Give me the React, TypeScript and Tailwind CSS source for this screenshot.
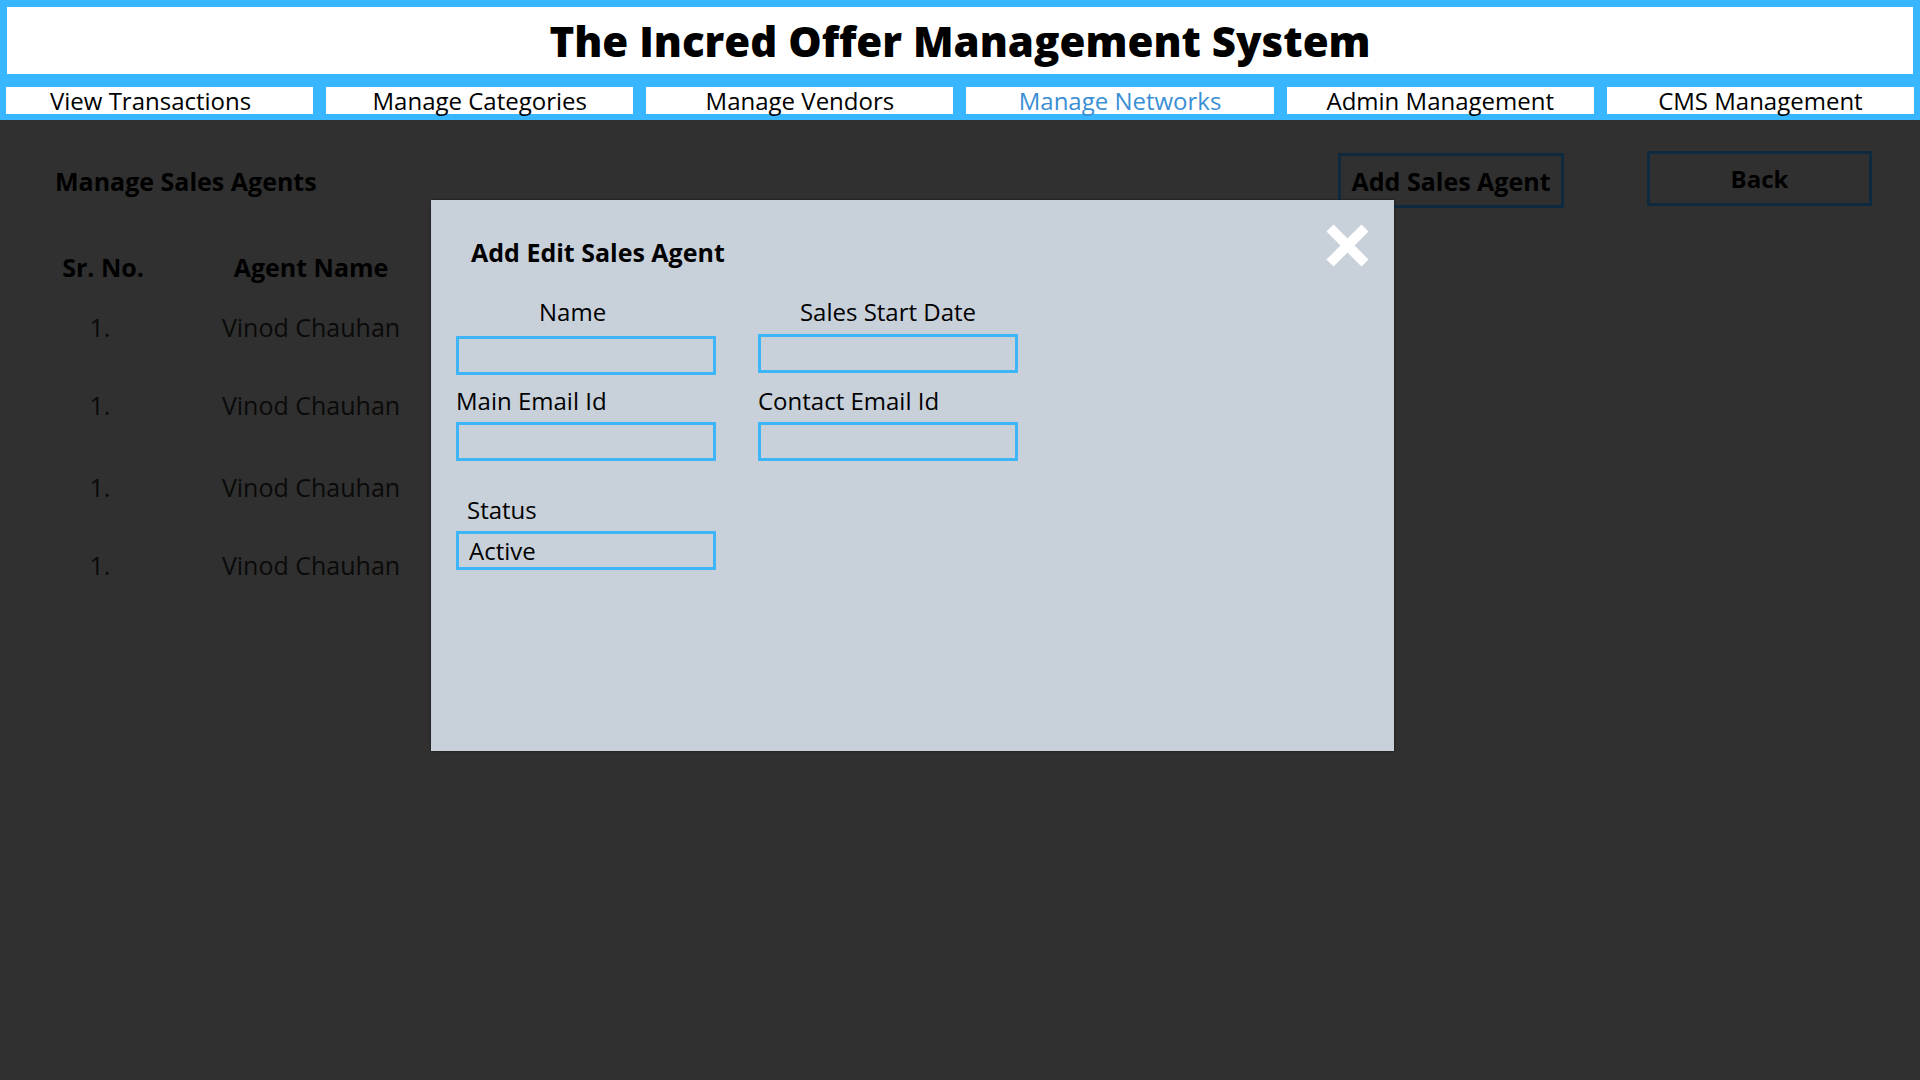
import React from "react";

const navItems = [
  "View Transactions",
  "Manage Categories",
  "Manage Vendors",
  "Manage Networks",
  "Admin Management",
  "CMS Management",
];

const rows = [
  { h: "h-[78px]" },
  { h: "h-[82px]" },
  { h: "h-[78px]" },
  { h: "h-[78px]" },
];

function Field({ className = "", children }: { className?: string; children?: React.ReactNode }) {
  return (
    <div
      className={`h-[39px] w-[260px] border-[3px] border-[#3db5f7] flex items-center pl-[10px] text-[24px] leading-[32px] text-black ${className}`}
    >
      {children}
    </div>
  );
}

export default function App() {
  return (
    <div
      className="relative w-[1920px] h-[1080px] bg-[#303030] flex flex-col overflow-hidden"
      style={{ fontFamily: '"Open Sans", "Noto Sans", sans-serif' }}
    >
      {/* Top header block */}
      <div className="bg-[#38b6ff] pt-[7px] pb-[6px]">
        <div className="mx-[7px] h-[67px] bg-white flex items-center justify-center">
          <h1 className="text-[42px] leading-[56px] font-extrabold text-black">
            The Incred Offer Management System
          </h1>
        </div>
        <nav className="mt-[13px] px-[6px] grid grid-cols-6 gap-[13px]">
          {navItems.map((n, i) => (
            <div
              key={n}
              className={`min-w-0 h-[27px] bg-white text-center text-[24px] leading-[27px] ${
                i === 0 ? "pr-[18px]" : ""
              } ${n === "Manage Networks" ? "text-[#3a8fd4]" : "text-black"}`}
            >
              {n}
            </div>
          ))}
        </nav>
      </div>

      {/* Content */}
      <div className="relative flex-1">
        <div className="flex items-start pt-[31px] pl-[55px] pr-[48px]">
          <h2 className="mt-[12px] text-[25px] leading-[36px] font-bold text-black">
            Manage Sales Agents
          </h2>
          <div className="flex-1" />
          <div className="mt-[2px] w-[226px] h-[55px] border-[3px] border-[#0e2a3e] flex items-center justify-center">
            <span className="text-[25px] leading-[34px] font-bold text-black whitespace-nowrap">
              Add Sales Agent
            </span>
          </div>
          <div className="ml-[83px] w-[225px] h-[55px] border-[3px] border-[#0e2a3e] flex items-center justify-center">
            <span className="text-[24px] leading-[34px] font-bold text-black">Back</span>
          </div>
        </div>

        {/* Table */}
        <div className="mt-[42px] ml-[40px] w-[416px]">
          <div className="grid grid-cols-[126px_290px] h-[60px] text-[25px] leading-[34px] font-bold text-black">
            <div className="text-center">Sr. No.</div>
            <div className="text-center">Agent Name</div>
          </div>
          {rows.map((r, i) => (
            <div
              key={i}
              className={`grid grid-cols-[126px_290px] ${r.h} text-[25px] leading-[34px] text-[#0a0a0a]`}
            >
              <div className="text-center pr-[6px]">1.</div>
              <div className="text-center">Vinod Chauhan</div>
            </div>
          ))}
        </div>

        {/* Modal */}
        <div className="absolute left-[431px] top-[80px] w-[963px] h-[551px] bg-[#c8d0da] shadow-[0_0_2px_rgba(0,0,0,0.6)]">
          <button className="absolute right-[25px] top-[24px] w-[43px] h-[43px]" aria-label="Close">
            <svg viewBox="0 0 43 43" width="43" height="43">
              <line x1="4" y1="4" x2="39" y2="39" stroke="white" strokeWidth="10" />
              <line x1="39" y1="4" x2="4" y2="39" stroke="white" strokeWidth="10" />
            </svg>
          </button>
          <div className="pt-[35px] pl-[40px]">
            <h3 className="text-[25px] leading-[34px] font-bold text-black">Add Edit Sales Agent</h3>
          </div>
          <div className="flex pl-[25px] gap-[42px]">
            {/* Column 1 */}
            <div className="flex flex-col w-[260px]">
              <div className="mt-[27px] ml-[83px] text-[24px] leading-[32px] text-black">Name</div>
              <Field className="mt-[8px]" />
              <div className="mt-[10px] text-[24px] leading-[32px] text-black">Main Email Id</div>
              <Field className="mt-[5px]" />
              <div className="mt-[33px] ml-[11px] text-[24px] leading-[32px] text-black">Status</div>
              <Field className="mt-[5px]">Active</Field>
            </div>
            {/* Column 2 */}
            <div className="flex flex-col w-[260px]">
              <div className="mt-[27px] text-center text-[24px] leading-[32px] text-black">
                Sales Start Date
              </div>
              <Field className="mt-[6px]" />
              <div className="mt-[12px] text-[24px] leading-[32px] text-black">Contact Email Id</div>
              <Field className="mt-[5px]" />
            </div>
          </div>
        </div>
      </div>
    </div>
  );
}
